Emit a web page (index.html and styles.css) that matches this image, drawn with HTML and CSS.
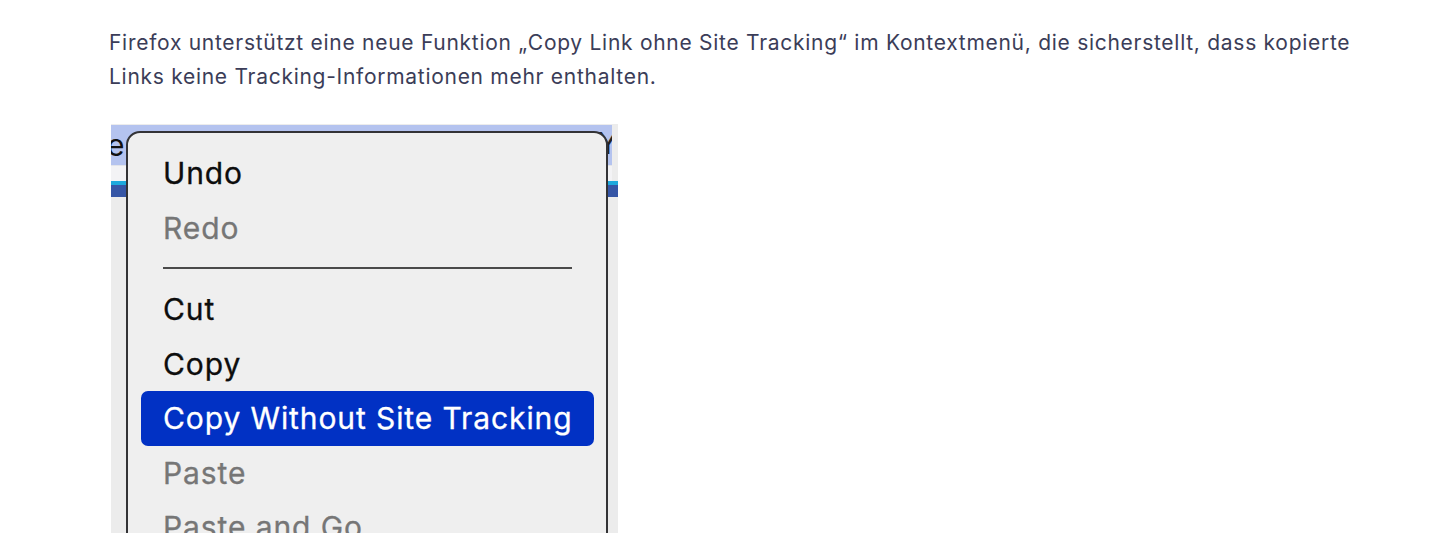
FILE: index.html
```html
<!DOCTYPE html>
<html lang="de">
<head>
<meta charset="utf-8">
<title>Firefox Copy Link</title>
<link rel="stylesheet" href="styles.css">
</head>
<body>
<main class="article">
  <p class="lead">Firefox unterstützt eine neue Funktion „Copy Link ohne Site Tracking“ im Kontextmenü, die sicherstellt, dass kopierte Links keine Tracking-Informationen mehr enthalten.</p>
  <figure class="shot">
    <div class="shot-top">
      <span class="peek-left">e</span>
      <span class="peek-right">Y</span>
    </div>
    <div class="shot-light"></div>
    <div class="shot-cyan"></div>
    <div class="shot-blue"></div>
    <div class="menu">
      <div class="item">Undo</div>
      <div class="item dim">Redo</div>
      <div class="sep"></div>
      <div class="item">Cut</div>
      <div class="item">Copy</div>
      <div class="item active">Copy Without Site Tracking</div>
      <div class="item dim">Paste</div>
      <div class="item dim">Paste and Go</div>
    </div>
  </figure>
</main>
</body>
</html>
```
FILE: styles.css
```css
html, body {
  margin: 0;
  padding: 0;
  background: #ffffff;
}
body {
  overflow: hidden;
  height: 533px;
}
.article {
  padding: 26px 0 0 109px;
  width: 1270px;
}
.lead {
  margin: 0;
  font-family: Inter, "Noto Sans", sans-serif;
  font-size: 21px;
  letter-spacing: 0.72px;
  line-height: 34px;
  color: #3b3d58;
}
.shot {
  margin: 30px 0 0 2px;
  width: 507px;
  height: 440px;
  position: relative;
  background: #ececec;
  overflow: hidden;
  font-family: Inter, "Liberation Sans", sans-serif;
}
.shot-top {
  margin-top: 1px;
  height: 40px;
  margin-right: 6px;
  background: #b4c3ef;
  position: relative;
  overflow: hidden;
}
.peek-left {
  position: absolute;
  left: -4px;
  top: 2px;
  font-size: 30px;
  color: #111;
}
.peek-right {
  position: absolute;
  right: -6px;
  top: 0px;
  font-size: 30px;
  color: #222;
}
.shot-light {
  height: 15px;
  margin-right: 6px;
  background: #f3f3f5;
  border-top: 1px solid #e2e4ea;
}
.shot-cyan {
  height: 4px;
  background: #1ea9dd;
}
.shot-blue {
  height: 12px;
  background: #3656a6;
}
.menu {
  position: absolute;
  left: 15px;
  top: 7px;
  width: 478px;
  height: 460px;
  border: 2px solid #333336;
  border-radius: 14px;
  background: #efefef;
  padding-top: 13px;
  box-sizing: content-box;
}
.item {
  height: 54.5px;
  margin: 0 12px 0 13px;
  padding-left: 22px;
  display: flex;
  align-items: center;
  font-size: 30px;
  font-weight: 400;
  letter-spacing: 0.9px;
  color: #0d0d0d;
  border-radius: 7px;
  -webkit-text-stroke: 0.3px currentColor;
}
.item.dim {
  color: #767676;
}
.item.active {
  background: #0131c4;
  color: #ffffff;
}
.sep {
  margin: 12px 34px 13px 35px;
  height: 2px;
  background: #4a4a4a;
}
```
